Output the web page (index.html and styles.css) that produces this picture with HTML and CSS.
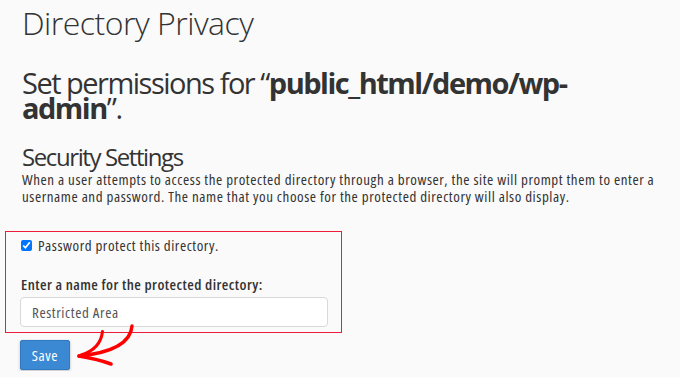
FILE: index.html
```html
<!DOCTYPE html>
<html>
<head>
<meta charset="utf-8">
<link rel="stylesheet" href="styles.css">
</head>
<body>
<div class="page">
  <h1 class="title">Directory Privacy</h1>
  <h2 class="subtitle">Set permissions for “<b>public_html/demo/wp-admin</b>”.</h2>
  <h3 class="section">Security Settings</h3>
  <p class="desc">When a user attempts to access the protected directory through a browser, the site will prompt them to enter a username and password. The name that you choose for the protected directory will also display.</p>
  <div class="box">
    <label class="check"><input type="checkbox" checked><span>Password protect this directory.</span></label>
    <label class="field-label" for="name">Enter a name for the protected directory:</label>
    <input class="text" id="name" type="text" value="Restricted Area">
  </div>
  <div class="actions">
    <button class="btn">Save</button>
    <svg class="arrow" width="70" height="50" viewBox="0 0 70 50">
      <path d="M61 5 C60 18 48 31 8 35" fill="none" stroke="#f00" stroke-width="3.4" stroke-linecap="round"/>
      <path d="M31.5 10.5 C30 24 20 31 10 34" fill="none" stroke="#f00" stroke-width="3" stroke-linecap="round"/>
      <path d="M8 35 C20 37 32 40 40 43" fill="none" stroke="#f00" stroke-width="3.6" stroke-linecap="round"/>
    </svg>
  </div>
</div>
</body>
</html>
```
FILE: styles.css
```css
html, body {
  margin: 0;
  padding: 0;
  background: #fafafa;
  overflow: hidden;
}
body {
  font-family: "Open Sans", "Liberation Sans", sans-serif;
  color: #333;
}
.page {
  padding: 5px 0 0 22px;
}
.title {
  margin: 0;
  font-size: 32px;
  font-weight: 300;
  letter-spacing: -0.5px;
  line-height: 36px;
  color: #333;
}
.subtitle {
  margin: 29px 0 0 0;
  width: 600px;
  font-size: 29px;
  font-weight: 400;
  letter-spacing: -1.5px;
  line-height: 25px;
  color: #333;
}
.subtitle b {
  font-weight: 700;
}
.section {
  margin: 23px 0 0 0;
  font-size: 24px;
  font-weight: 400;
  letter-spacing: -1.4px;
  line-height: 28px;
  color: #333;
}
.desc {
  margin: 0;
  width: 640px;
  font-size: 15px;
  font-stretch: 75%;
  letter-spacing: 0.57px;
  line-height: 17px;
}
.box {
  box-sizing: border-box;
  margin: 26px 0 0 -17px;
  width: 337px;
  border: 1px solid #ed1c3a;
  padding: 3px 0 5px 15px;
  display: flex;
  flex-direction: column;
  align-items: flex-start;
}
.check {
  display: flex;
  align-items: center;
  gap: 6px;
  font-size: 15px;
  font-stretch: 75%;
  letter-spacing: 0.55px;
  line-height: 20px;
}
.check input {
  margin: 0;
  width: 11px;
  height: 11px;
}
.field-label {
  margin-top: 19px;
  font-size: 15px;
  font-weight: 600;
  font-stretch: 75%;
  letter-spacing: 0.45px;
  line-height: 20px;
}
.text {
  margin: 3px 0 0 -1px;
  box-sizing: border-box;
  width: 308px;
  height: 30px;
  border: 1px solid #d9d9d9;
  border-radius: 4px;
  padding: 0 11px;
  font-family: inherit;
  font-size: 15px;
  font-stretch: 75%;
  letter-spacing: 0.6px;
  color: #555;
  background: #fff;
}
.actions {
  display: flex;
  align-items: flex-start;
  margin: 7px 0 0 -2px;
}
.btn {
  width: 50px;
  height: 30px;
  border: 1px solid #3079c0;
  border-radius: 2px;
  background: #3b89d3;
  color: #fff;
  font-family: inherit;
  font-size: 15px;
  font-stretch: 75%;
  letter-spacing: 0.6px;
  padding: 0;
  box-shadow: 0 1px 3px rgba(0,0,0,0.25);
}
.arrow {
  flex: none;
  margin: -19px 0 0 1px;
}
```
